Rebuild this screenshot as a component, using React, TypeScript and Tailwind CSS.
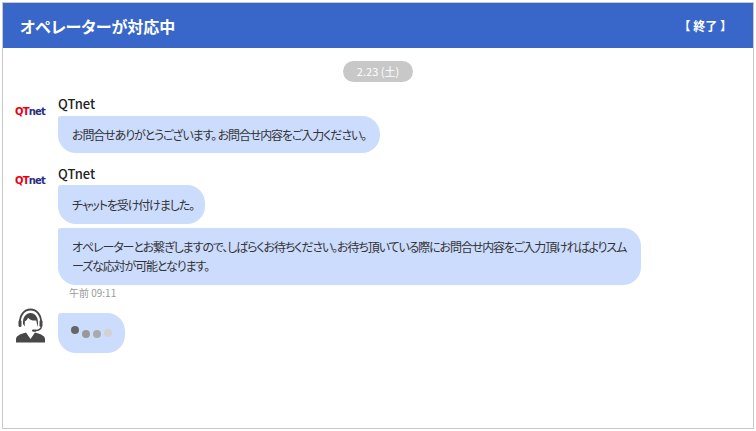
const bodyFont = "font-['Noto_Sans_CJK_JP','Noto_Sans',sans-serif]";
const bubble = "rounded-[3px_18px_18px_18px] bg-[#ccdcfd]";
const bubbleText = "text-[12px] tracking-[-1.12px] whitespace-nowrap text-[#333] [font-feature-settings:'palt']";

function QtnetLogo() {
  return (
    <div className="flex w-[31px] items-baseline font-['DejaVu_Sans',sans-serif] text-[10px] leading-none font-bold tracking-[-0.8px]">
      <span className="text-[#e60012]">QT</span>
      <span className="text-[#2b2f7f]">net</span>
    </div>
  );
}

function OperatorIcon() {
  return (
    <svg width="30" height="36" viewBox="0 0 30 36" className="text-[#484848]">
      <path
        d="M4.800 15C4.800 6.500 9.500 1.500 15.500 1.500S26.200 6.500 26.200 15"
        fill="none"
        stroke="currentColor"
        strokeWidth="1.800"
      />
      <rect x="3.500" y="12" width="3" height="7" rx="1.500" fill="currentColor" />
      <rect x="24.500" y="12" width="3" height="7" rx="1.500" fill="currentColor" />
      <path
        d="M8 16C7.500 9 11 5 15.500 5S23.500 9 23 16l-1 3c.2-3-.2-4.800-.9-6.500-3.100.4-6.100-.6-8.100-2.800-.6 1.700-1.700 2.800-3.100 3.500-.3 1.700-.2 3.500.1 5.300Z"
        fill="currentColor"
      />
      <path
        d="M26.500 18.500c-.5 2.500-2.800 4-6 4.200"
        fill="none"
        stroke="currentColor"
        strokeWidth="1.300"
      />
      <rect x="17" y="21.500" width="4.500" height="2.200" rx="1.100" fill="currentColor" />
      <path
        d="M11 24.500 15.500 31l4.500-6.500c4 1.200 10 2.800 10 6.500v3.500H1V31c0-3.700 6-5.300 10-6.500Z"
        fill="currentColor"
      />
    </svg>
  );
}

export default function App() {
  return (
    <div className={`h-[431px] w-[756px] overflow-hidden bg-white p-[2px] ${bodyFont}`}>
      <div className="flex h-full flex-col border border-[#c8c8c8]">
        <header className="flex h-[45px] shrink-0 items-center justify-between bg-[#3967c9] pr-[21px] pl-[17px] text-white">
          <h1 className="text-[16px] font-bold [font-feature-settings:'palt']">オペレーターが対応中</h1>
          <button className="text-[12px] font-bold">【 終了 】</button>
        </header>

        <main className="flex flex-1 flex-col px-[12px] pt-[13px]">
          <div className="flex justify-center">
            <span className="flex h-[21px] w-[70px] items-center justify-center rounded-full bg-[#c8c8c8] text-[11px] text-white">
              2.23 (土)
            </span>
          </div>

          <div className="mt-[10px] flex">
            <div className="flex w-[43px] shrink-0 pt-[15px]">
              <QtnetLogo />
            </div>
            <div className="flex flex-col items-start">
              <p className="text-[13px] leading-[24px] font-medium text-[#222]">QTnet</p>
              <div className={`flex h-[37px] w-[322px] items-center px-[14px] ${bubble} ${bubbleText}`}>
                お問合せありがとうございます。 お問合せ内容をご入力ください。
              </div>
            </div>
          </div>

          <div className="mt-[10px] flex">
            <div className="flex w-[43px] shrink-0 pt-[13px]">
              <QtnetLogo />
            </div>
            <div className="flex flex-col items-start">
              <p className="text-[13px] leading-[22px] font-medium text-[#222]">QTnet</p>
              <div className={`flex h-[39px] w-[147px] items-center px-[14px] ${bubble} ${bubbleText}`}>
                チャットを受け付けました。
              </div>
              <div className={`mt-[4px] h-[57px] w-[583px] px-[14px] py-[9px] leading-[19px] ${bubble} ${bubbleText}`}>
                オペレーターとお繋ぎしますので、しばらくお待ちください。お待ち頂いている際にお問合せ内容をご入力頂ければよりスム
                <br />
                ーズな応対が可能となります。
              </div>
              <p className="mt-[1px] ml-[11px] text-[10px] leading-[14px] text-[#999]">午前 09:11</p>
            </div>
          </div>

          <div className="mt-[13px] flex">
            <div className="-mt-[5px] w-[43px] shrink-0">
              <OperatorIcon />
            </div>
            <div className={`flex h-[40px] w-[67px] items-center gap-[3px] pl-[13px] ${bubble}`}>
              <span className="size-[8px] -translate-y-[3px] rounded-full bg-[#666]" />
              <span className="size-[8px] translate-y-[1px] rounded-full bg-[#999]" />
              <span className="size-[8px] translate-y-[1px] rounded-full bg-[#aaa]" />
              <span className="size-[8px] rounded-full bg-[#d2d2d2]" />
            </div>
          </div>
        </main>
      </div>
    </div>
  );
}
